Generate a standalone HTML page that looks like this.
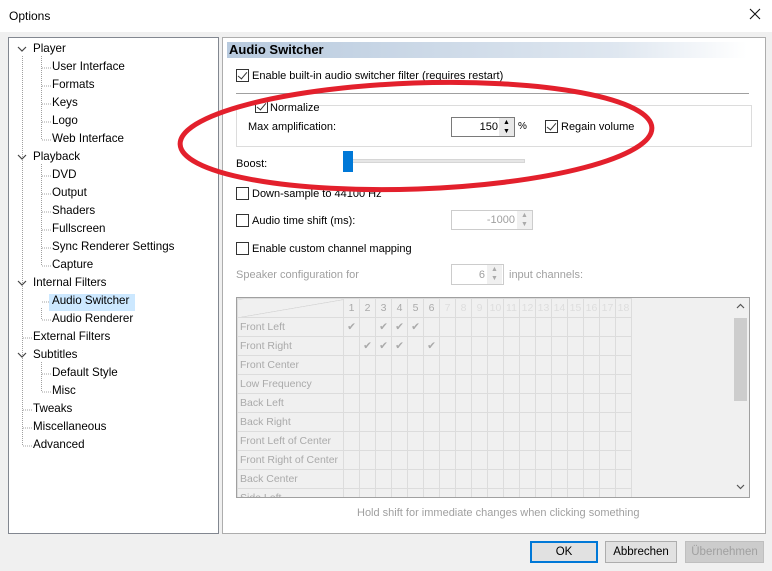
<!DOCTYPE html>
<html><head><meta charset="utf-8"><style>
*{box-sizing:border-box;margin:0;padding:0}
body{width:772px;height:571px;background:#f0f0f0;font-family:"Liberation Sans",sans-serif;font-size:11px;color:#000;position:relative;overflow:hidden}
.abs{position:absolute}
#title{left:0;top:0;width:772px;height:32px;background:#fff}
#tree{left:8px;top:37px;width:211px;height:497px;background:#fff;border:1px solid #828790;font-size:11.6px}
.ti{position:absolute;white-space:nowrap;line-height:16px}
#right{left:222px;top:37px;width:544px;height:497px;background:#fff;border:1px solid #adadad}
.cb{position:absolute;width:13px;height:13px;border:1px solid #333;background:#fff}
.cb.on::after{content:"";position:absolute;left:3px;top:0px;width:4px;height:8px;border:solid #333;border-width:0 1.5px 1.5px 0;transform:rotate(40deg)}
.lbl{position:absolute;white-space:nowrap;line-height:14px}
.gray{color:#a0a0a0}
.btn{position:absolute;height:22px;border:1px solid #adadad;background:#e1e1e1;text-align:center;line-height:20px;font-size:11.5px}
table{border-collapse:collapse}
td{border:1px solid #dcdcdc;height:19px;width:16px;color:#aaa;font-size:10.5px;text-align:center;padding:0}
td.h{width:106px;text-align:left;padding-left:2px;white-space:nowrap;font-size:10.5px}
</style></head><body>
<div id="title" class="abs"><span class="abs" style="left:9px;top:9px;font-size:12px">Options</span>
<svg class="abs" style="left:749px;top:8px" width="12" height="12"><path d="M1 1L11 11M11 1L1 11" stroke="#111" stroke-width="1.1"/></svg></div>

<div id="tree" class="abs">
<svg class="abs" style="left:0;top:0" width="210" height="420">
<g stroke="#a0a0a0" stroke-dasharray="1 1" fill="none">
<line x1="13.5" y1="18" x2="13.5" y2="408"/>
<line x1="32.5" y1="18" x2="32.5" y2="102"/>
<line x1="32.5" y1="126" x2="32.5" y2="228"/>
<line x1="32.5" y1="270" x2="32.5" y2="282"/>
<line x1="32.5" y1="324" x2="32.5" y2="354"/>
<g>
<line x1="33" y1="30" x2="42" y2="30"/><line x1="33" y1="48" x2="42" y2="48"/><line x1="33" y1="66" x2="42" y2="66"/><line x1="33" y1="84" x2="42" y2="84"/><line x1="33" y1="102" x2="42" y2="102"/>
<line x1="33" y1="138" x2="42" y2="138"/><line x1="33" y1="156" x2="42" y2="156"/><line x1="33" y1="174" x2="42" y2="174"/><line x1="33" y1="192" x2="42" y2="192"/><line x1="33" y1="210" x2="42" y2="210"/><line x1="33" y1="228" x2="42" y2="228"/>
<line x1="33" y1="264" x2="42" y2="264"/><line x1="33" y1="282" x2="42" y2="282"/>
<line x1="14" y1="300" x2="23" y2="300"/>
<line x1="33" y1="336" x2="42" y2="336"/><line x1="33" y1="354" x2="42" y2="354"/>
<line x1="14" y1="372" x2="23" y2="372"/><line x1="14" y1="390" x2="23" y2="390"/><line x1="14" y1="408" x2="23" y2="408"/>
</g></g>
<g stroke="#444" fill="none" stroke-width="1.2">
<path d="M9 9l4 4 4-4"/><path d="M9 117l4 4 4-4"/><path d="M9 243l4 4 4-4"/><path d="M9 315l4 4 4-4"/>
</g></svg>
<div class="abs" style="left:40px;top:256px;width:86px;height:17px;background:#cce8ff"></div>
<div class="ti" style="left:24px;top:3px">Player</div>
<div class="ti" style="left:43px;top:21px">User Interface</div>
<div class="ti" style="left:43px;top:39px">Formats</div>
<div class="ti" style="left:43px;top:57px">Keys</div>
<div class="ti" style="left:43px;top:75px">Logo</div>
<div class="ti" style="left:43px;top:93px">Web Interface</div>
<div class="ti" style="left:24px;top:111px">Playback</div>
<div class="ti" style="left:43px;top:129px">DVD</div>
<div class="ti" style="left:43px;top:147px">Output</div>
<div class="ti" style="left:43px;top:165px">Shaders</div>
<div class="ti" style="left:43px;top:183px">Fullscreen</div>
<div class="ti" style="left:43px;top:201px">Sync Renderer Settings</div>
<div class="ti" style="left:43px;top:219px">Capture</div>
<div class="ti" style="left:24px;top:237px">Internal Filters</div>
<div class="ti" style="left:43px;top:255px">Audio Switcher</div>
<div class="ti" style="left:43px;top:273px">Audio Renderer</div>
<div class="ti" style="left:24px;top:291px">External Filters</div>
<div class="ti" style="left:24px;top:309px">Subtitles</div>
<div class="ti" style="left:43px;top:327px">Default Style</div>
<div class="ti" style="left:43px;top:345px">Misc</div>
<div class="ti" style="left:24px;top:363px">Tweaks</div>
<div class="ti" style="left:24px;top:381px">Miscellaneous</div>
<div class="ti" style="left:24px;top:399px">Advanced</div>
</div>

<div id="right" class="abs"></div>
<div class="abs" style="left:227px;top:42px;width:520px;height:16px;background:linear-gradient(to right,#b8cade,#dfe7f0 75%,#fff)"></div>
<div class="lbl" style="left:229px;top:43px;font-weight:bold;font-size:13px">Audio Switcher</div>

<div class="cb on" style="left:236px;top:69px"></div>
<div class="lbl" style="left:252px;top:69px">Enable built-in audio switcher filter (requires restart)</div>
<div class="abs" style="left:236px;top:93px;width:513px;height:1px;background:#a0a0a0"></div>
<div class="abs" style="left:236px;top:105px;width:516px;height:42px;border:1px solid #dcdcdc"></div>
<div class="abs" style="left:252px;top:99px;width:66px;height:14px;background:#fff"></div>
<div class="cb on" style="left:255px;top:100px"></div>
<div class="lbl" style="left:270px;top:101px">Normalize</div>
<div class="lbl" style="left:248px;top:120px">Max amplification:</div>
<div class="abs" style="left:451px;top:117px;width:64px;height:20px;border:1px solid #7a7a7a;background:#fff"></div>
<div class="lbl" style="left:470px;top:120px;width:28px;text-align:right">150</div>
<div class="abs" style="left:499px;top:118px;width:15px;height:18px;background:#e8e8e8;font-size:7px;line-height:9px;text-align:center">▲<br>▼</div>
<div class="lbl" style="left:518px;top:120px;font-size:10px">%</div>
<div class="cb on" style="left:545px;top:120px"></div>
<div class="lbl" style="left:561px;top:120px">Regain volume</div>
<div class="lbl" style="left:236px;top:157px">Boost:</div>
<div class="abs" style="left:343px;top:159px;width:182px;height:4px;background:#e6e6e6;border:1px solid #d6d6d6"></div>
<div class="abs" style="left:343px;top:151px;width:10px;height:21px;background:#0078d7"></div>

<div class="cb" style="left:236px;top:187px"></div>
<div class="lbl" style="left:252px;top:187px">Down-sample to 44100 Hz</div>
<div class="cb" style="left:236px;top:214px"></div>
<div class="lbl" style="left:252px;top:214px">Audio time shift (ms):</div>
<div class="abs" style="left:451px;top:210px;width:82px;height:20px;border:1px solid #ccc;background:#fff"></div>
<div class="lbl gray" style="left:470px;top:213px;width:45px;text-align:right">-1000</div>
<div class="abs" style="left:517px;top:211px;width:15px;height:18px;background:#f0f0f0;color:#aaa;font-size:7px;line-height:9px;text-align:center">▲<br>▼</div>
<div class="cb" style="left:236px;top:242px"></div>
<div class="lbl" style="left:252px;top:242px">Enable custom channel mapping</div>
<div class="lbl gray" style="left:236px;top:268px">Speaker configuration for</div>
<div class="abs" style="left:451px;top:264px;width:53px;height:21px;border:1px solid #ccc;background:#fff"></div>
<div class="lbl gray" style="left:455px;top:268px;width:30px;text-align:right">6</div>
<div class="abs" style="left:487px;top:265px;width:15px;height:19px;background:#f0f0f0;color:#aaa;font-size:7px;line-height:9px;text-align:center">▲<br>▼</div>
<div class="lbl gray" style="left:509px;top:268px">input channels:</div>

<div class="abs" style="left:236px;top:297px;width:514px;height:201px;border:1px solid #a0a0a0;background:#f0f0f0;overflow:hidden">
<table style="position:absolute;left:0;top:0">
<tr><td class="h" style="background:linear-gradient(to bottom right,transparent 49%,#ccc 50%,transparent 52%)"></td><td>1</td><td>2</td><td>3</td><td>4</td><td>5</td><td>6</td><td style="color:#ddd">7</td><td style="color:#ddd">8</td><td style="color:#ddd">9</td><td style="color:#ddd">10</td><td style="color:#ddd">11</td><td style="color:#ddd">12</td><td style="color:#ddd">13</td><td style="color:#ddd">14</td><td style="color:#ddd">15</td><td style="color:#ddd">16</td><td style="color:#ddd">17</td><td style="color:#ddd">18</td></tr>
<tr><td class="h">Front Left</td><td>✔</td><td></td><td>✔</td><td>✔</td><td>✔</td><td></td><td></td><td></td><td></td><td></td><td></td><td></td><td></td><td></td><td></td><td></td><td></td><td></td></tr>
<tr><td class="h">Front Right</td><td></td><td>✔</td><td>✔</td><td>✔</td><td></td><td>✔</td><td></td><td></td><td></td><td></td><td></td><td></td><td></td><td></td><td></td><td></td><td></td><td></td></tr>
<tr><td class="h">Front Center</td><td></td><td></td><td></td><td></td><td></td><td></td><td></td><td></td><td></td><td></td><td></td><td></td><td></td><td></td><td></td><td></td><td></td><td></td></tr>
<tr><td class="h">Low Frequency</td><td></td><td></td><td></td><td></td><td></td><td></td><td></td><td></td><td></td><td></td><td></td><td></td><td></td><td></td><td></td><td></td><td></td><td></td></tr>
<tr><td class="h">Back Left</td><td></td><td></td><td></td><td></td><td></td><td></td><td></td><td></td><td></td><td></td><td></td><td></td><td></td><td></td><td></td><td></td><td></td><td></td></tr>
<tr><td class="h">Back Right</td><td></td><td></td><td></td><td></td><td></td><td></td><td></td><td></td><td></td><td></td><td></td><td></td><td></td><td></td><td></td><td></td><td></td><td></td></tr>
<tr><td class="h">Front Left of Center</td><td></td><td></td><td></td><td></td><td></td><td></td><td></td><td></td><td></td><td></td><td></td><td></td><td></td><td></td><td></td><td></td><td></td><td></td></tr>
<tr><td class="h">Front Right of Center</td><td></td><td></td><td></td><td></td><td></td><td></td><td></td><td></td><td></td><td></td><td></td><td></td><td></td><td></td><td></td><td></td><td></td><td></td></tr>
<tr><td class="h">Back Center</td><td></td><td></td><td></td><td></td><td></td><td></td><td></td><td></td><td></td><td></td><td></td><td></td><td></td><td></td><td></td><td></td><td></td><td></td></tr>
<tr><td class="h">Side Left</td><td></td><td></td><td></td><td></td><td></td><td></td><td></td><td></td><td></td><td></td><td></td><td></td><td></td><td></td><td></td><td></td><td></td><td></td></tr>
</table>
<div class="abs" style="left:495px;top:0;width:17px;height:199px;background:#f0f0f0"></div>
<div class="abs" style="left:497px;top:20px;width:13px;height:83px;background:#cdcdcd"></div>
<svg class="abs" style="left:499px;top:5px" width="9" height="6"><path d="M1 5L4.5 1.5L8 5" stroke="#555" fill="none" stroke-width="1.2"/></svg>
<svg class="abs" style="left:499px;top:186px" width="9" height="6"><path d="M1 1L4.5 4.5L8 1" stroke="#555" fill="none" stroke-width="1.2"/></svg>
</div>
<div class="lbl gray" style="left:357px;top:506px">Hold shift for immediate changes when clicking something</div>

<div class="btn" style="left:530px;top:541px;width:68px;border:2px solid #0078d7;line-height:18px">OK</div>
<div class="btn" style="left:605px;top:541px;width:72px">Abbrechen</div>
<div class="btn" style="left:685px;top:541px;width:79px;color:#a0a0a0;background:#ccc;border-color:#bfbfbf">Übernehmen</div>

<svg class="abs" style="left:0;top:0" width="772" height="571"><ellipse cx="416" cy="136" rx="236" ry="53" transform="rotate(-2 416 136)" fill="none" stroke="#e3202c" stroke-width="5"/></svg>
</body></html>
